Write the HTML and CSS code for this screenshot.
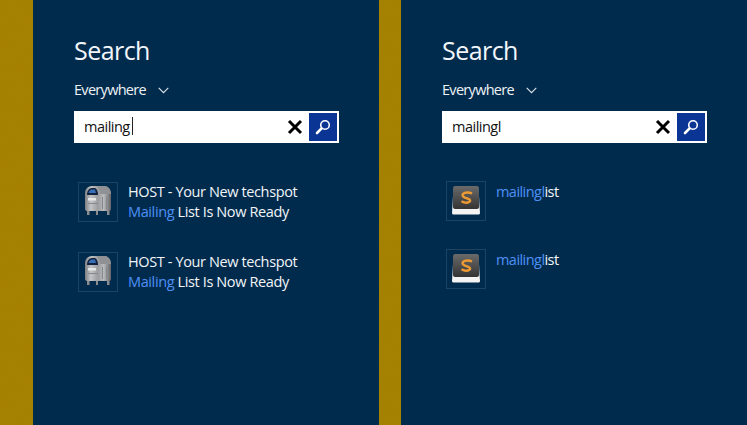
FILE: index.html
```html
<!DOCTYPE html>
<html lang="en">
<head>
<meta charset="utf-8">
<title>Search</title>
<link rel="stylesheet" href="styles.css">
</head>
<body>
<svg class="defs" width="0" height="0" aria-hidden="true">
  <defs>
    <linearGradient id="boxBody" x1="0" x2="1" y1="0" y2="0">
      <stop offset="0" stop-color="#7c7e81"/><stop offset=".22" stop-color="#c2c4c6"/><stop offset=".5" stop-color="#9a9c9f"/><stop offset=".72" stop-color="#b8babc"/><stop offset="1" stop-color="#626467"/>
    </linearGradient>
    <linearGradient id="boxTop" x1="0" x2="0" y1="0" y2="1">
      <stop offset="0" stop-color="#6a6a6a"/><stop offset="1" stop-color="#343434"/>
    </linearGradient>
    <symbol id="mailbox" viewBox="0 0 40 40">
      <path d="M9 27h2.500v6H9zM18 28h2v5h-2zM29 27h2.500v6H29z" fill="#8a8d90"/>
      <path d="M7 11c0-4 3-7 7-7h12c4 0 7 3 7 8v15c0 1-1 2-2 2H9c-1 0-2-1-2-2z" fill="url(#boxBody)"/>
      <path d="M9 13c0-4 2-7 5-7h3c2 1 3 4 3 7z" fill="#14213c"/>
      <path d="M10.500 11c.5-2 2-3.500 3.500-3.500h3l1 3.500z" fill="#3570b8"/>
      <path d="M19 4h7c4 0 7 3 7 8h-11c0-3-1-6-3-8z" fill="#8f9194"/>
      <rect x="10" y="16" width="8" height="2.500" fill="#e6e7e8"/>
      <path d="M10 21h10v1H10zM24 15h1v12h-1zM28 15h1v12h-1z" fill="#86888b"/>
    </symbol>
    <symbol id="sublime" viewBox="0 0 40 40">
      <path d="M7.500 7h25l1.500 25c0 1-1 1.500-2 1.500H8c-1 0-2-.5-2-1.500z" fill="#f4f4f4"/>
      <path d="M9 5h22c1 0 2 1 2 2v19c0 1-1 2-2 2H9c-1 0-2-1-2-2V7c0-1 1-2 2-2z" fill="url(#boxTop)"/>
      <path d="M26 12.500c-2.600-1.400-7.300-1.400-8.900.4-1.200 1.400-.3 2.900 1.800 3.700l3.500 1.300c1.900.7 2.300 2 1 2.900-1.900 1.300-5.500.9-7.900-.5" fill="none" stroke="#ee9a33" stroke-width="2.400"/>
    </symbol>
    <symbol id="glass" viewBox="0 0 28 28">
      <circle cx="16" cy="12" r="4.300" fill="none" stroke="#fff" stroke-width="1.600"/>
      <path d="M12.600 15.400L8 20" stroke="#fff" stroke-width="2.600" stroke-linecap="round"/>
    </symbol>
  </defs>
</svg>
<main class="screen">
  <div class="gold gold-wide"></div>
  <section class="pane">
    <h1 class="title">Search</h1>
    <div class="scope">
      <span>Everywhere</span>
      <svg class="chev" viewBox="0 0 11 7" width="11" height="7"><path d="M.7.8l4.800 4.800L10.300.8" fill="none" stroke="#dfe6ee" stroke-width="1.100"/></svg>
    </div>
    <div class="box">
      <span class="query">mailing<i class="caret"></i></span>
      <svg class="clear" viewBox="0 0 16 16" width="16" height="16"><path d="M2 2l12 12M14 2L2 14" stroke="#000" stroke-width="3"/></svg>
      <span class="go"><svg viewBox="0 0 28 28" width="28" height="28"><use href="#glass"/></svg></span>
    </div>
    <ul class="results results-mail">
      <li class="item">
        <span class="thumb"><svg width="40" height="40"><use href="#mailbox"/></svg></span>
        <p class="label">HOST - Your New techspot<br><b class="hit">Mailing</b> List Is Now Ready</p>
      </li>
      <li class="item">
        <span class="thumb"><svg width="40" height="40"><use href="#mailbox"/></svg></span>
        <p class="label">HOST - Your New techspot<br><b class="hit">Mailing</b> List Is Now Ready</p>
      </li>
    </ul>
  </section>
  <div class="gold gold-narrow"></div>
  <section class="pane">
    <h1 class="title">Search</h1>
    <div class="scope">
      <span>Everywhere</span>
      <svg class="chev" viewBox="0 0 11 7" width="11" height="7"><path d="M.7.8l4.800 4.800L10.300.8" fill="none" stroke="#dfe6ee" stroke-width="1.100"/></svg>
    </div>
    <div class="box">
      <span class="query">mailingl</span>
      <svg class="clear" viewBox="0 0 16 16" width="16" height="16"><path d="M2 2l12 12M14 2L2 14" stroke="#000" stroke-width="3"/></svg>
      <span class="go"><svg viewBox="0 0 28 28" width="28" height="28"><use href="#glass"/></svg></span>
    </div>
    <ul class="results results-app">
      <li class="item">
        <span class="thumb"><svg width="40" height="40"><use href="#sublime"/></svg></span>
        <p class="label"><b class="hit">mailingl</b>ist</p>
      </li>
      <li class="item">
        <span class="thumb"><svg width="40" height="40"><use href="#sublime"/></svg></span>
        <p class="label"><b class="hit">mailingl</b>ist</p>
      </li>
    </ul>
  </section>
</main>
</body>
</html>
```
FILE: styles.css
```css
html, body {
  margin: 0;
  padding: 0;
  height: 425px;
  overflow: hidden;
  background: #012b4d;
}
.defs { position: absolute; }
.screen {
  display: flex;
  width: 747px;
  height: 425px;
  font-family: "Open Sans", "Noto Sans", sans-serif;
  color: #fff;
}
.gold {
  flex: none;
  background-color: #a67f02;
  background-image: url("data:image/svg+xml,%3Csvg xmlns='http://www.w3.org/2000/svg' width='120' height='120'%3E%3Cfilter id='n'%3E%3CfeTurbulence type='fractalNoise' baseFrequency='.7' numOctaves='2'/%3E%3CfeColorMatrix values='0 0 0 0 .35 0 0 0 0 .25 0 0 0 0 0 0 0 0 .7 -.15'/%3E%3C/filter%3E%3Crect width='120' height='120' filter='url(%23n)'/%3E%3C/svg%3E");
}
.gold-wide { width: 33px; }
.gold-narrow { width: 22px; }
.pane {
  flex: none;
  width: 346px;
  box-sizing: border-box;
  padding: 32px 0 0 41px;
  background: #012b4d;
}
.title {
  margin: 0;
  font-size: 25px;
  line-height: 36px;
  font-weight: 400;
  letter-spacing: -.55px;
  color: #f2f6fa;
}
.scope {
  display: flex;
  align-items: center;
  gap: 12px;
  margin-top: 11px;
  height: 20px;
  font-size: 14.500px;
  letter-spacing: -.7px;
  color: #eef2f6;
}
.chev { margin-top: 2px; }
.box {
  display: flex;
  align-items: center;
  box-sizing: border-box;
  width: 265px;
  height: 32px;
  margin-top: 12px;
  padding: 2px;
  background: #fff;
}
.query {
  flex: 1;
  padding-left: 8px;
  padding-bottom: 2px;
  font-size: 14.500px;
  letter-spacing: -.5px;
  color: #111;
  display: flex;
  align-items: center;
}
.caret {
  display: inline-block;
  width: 1px;
  height: 18px;
  margin-left: 2px;
  background: #222;
}
.clear { margin-right: 6px; }
.go {
  flex: none;
  width: 28px;
  height: 28px;
  background: #0a3594;
  display: block;
}
.go svg { display: block; }
.results {
  list-style: none;
  margin: 0;
  padding: 0 0 0 4px;
  display: flex;
  flex-direction: column;
}
.results-mail { margin-top: 39px; gap: 30px; }
.results-app { margin-top: 38px; gap: 28px; }
.item {
  display: flex;
  gap: 10px;
  height: 40px;
}
.thumb {
  flex: none;
  width: 40px;
  height: 40px;
  box-sizing: border-box;
  outline: 1px solid #1c4364;
  outline-offset: -1px;
  display: block;
}
.thumb svg { display: block; }
.label {
  margin: 0;
  font-size: 14.500px;
  line-height: 20px;
  letter-spacing: -.38px;
  color: #f2f5f8;
}
.results-app .label {
  margin-top: 1px;
  letter-spacing: -.55px;
}
.hit {
  font-weight: 400;
  color: #4d90f5;
}
```
